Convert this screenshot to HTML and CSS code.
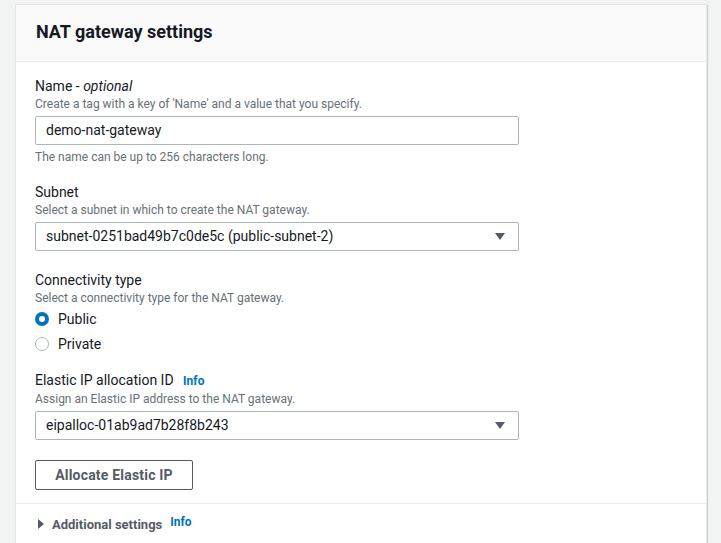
FILE: index.html
```html
<!DOCTYPE html>
<html>
<head>
<meta charset="utf-8">
<link rel="stylesheet" href="styles.css">
</head>
<body>
<div class="card">
  <div class="card-header"><h2 class="title">NAT gateway settings</h2></div>
  <div class="card-body">
    <div class="field">
      <div class="label">Name - <i>optional</i></div>
      <div class="desc">Create a tag with a key of 'Name' and a value that you specify.</div>
      <div class="input">demo-nat-gateway</div>
      <div class="hint">The name can be up to 256 characters long.</div>
    </div>
    <div class="field">
      <div class="label">Subnet</div>
      <div class="desc">Select a subnet in which to create the NAT gateway.</div>
      <div class="input select">subnet-0251bad49b7c0de5c (public-subnet-2)<span class="caret"></span></div>
    </div>
    <div class="field field-conn">
      <div class="label">Connectivity type</div>
      <div class="desc">Select a connectivity type for the NAT gateway.</div>
      <div class="radios">
        <div class="radio-row"><span class="radio checked"></span>Public</div>
        <div class="radio-row"><span class="radio"></span>Private</div>
      </div>
    </div>
    <div class="field field-eip">
      <div class="label">Elastic IP allocation ID <span class="info">Info</span></div>
      <div class="desc">Assign an Elastic IP address to the NAT gateway.</div>
      <div class="input select">eipalloc-01ab9ad7b28f8b243<span class="caret"></span></div>
    </div>
    <button class="btn">Allocate Elastic IP</button>
  </div>
  <div class="card-footer">
    <span class="expander"></span><span class="exp-label">Additional settings</span><span class="info info-sm">Info</span>
  </div>
</div>
</body>
</html>
```

FILE: styles.css
```css
html, body {
  margin: 0;
  padding: 0;
  background: #f2f3f3;
  font-family: Roboto, "Liberation Sans", sans-serif;
  color: #16191f;
}
body {
  padding: 4px 14px 0 15px;
  height: 543px;
  box-sizing: border-box;
  overflow: hidden;
}
.card {
  background: #fff;
  border: 1px solid #e4e6e6;
  box-shadow: 1px 1px 1px rgba(0,28,36,0.15);
  height: 560px;
}
.card-header {
  background: #fafafa;
  border-bottom: 1px solid #eaeded;
  padding: 16px 20px 0 20px;
  height: 40px;
}
.title {
  margin: 0;
  font-size: 18px;
  line-height: 22px;
  font-weight: 700;
}
.card-body {
  padding: 15px 0 13px 19px;
  border-bottom: 1px solid #eaeded;
}
.field + .field { margin-top: 18px; }
.field.field-conn { margin-top: 20px; }
.field.field-eip { margin-top: 15px; }
.label {
  font-size: 14px;
  line-height: 19px;
}
.desc, .hint {
  font-size: 12px;
  line-height: 16px;
  color: #687078;
}
.hint { margin-top: 4px; }
.input {
  margin-top: 4px;
  width: 484px;
  height: 29px;
  box-sizing: border-box;
  border: 1px solid #aab7b8;
  border-radius: 2px;
  padding: 0 10px;
  font-size: 14px;
  line-height: 27px;
  position: relative;
}
.caret {
  position: absolute;
  right: 13px;
  top: 10px;
  width: 0;
  height: 0;
  border-left: 5px solid transparent;
  border-right: 5px solid transparent;
  border-top: 7px solid #545b64;
}
.radio-row {
  display: flex;
  align-items: center;
  height: 25px;
  font-size: 14px;
}
.radio {
  width: 14px;
  height: 14px;
  box-sizing: border-box;
  border: 1px solid #aab7b8;
  border-radius: 50%;
  margin-right: 9px;
}
.radio.checked {
  border: 4px solid #0073bb;
}
.info {
  color: #0073bb;
  font-weight: 700;
  font-size: 12px;
  margin-left: 6px;
}
.btn {
  display: block;
  margin-top: 20px;
  height: 30px;
  width: 158px;
  border: 1px solid #545b64;
  border-radius: 2px;
  background: #fff;
  color: #545b64;
  font-family: inherit;
  font-size: 14px;
  font-weight: 700;
  letter-spacing: 0.2px;
  padding: 0;
}
.card-footer {
  display: flex;
  align-items: center;
  padding: 10px 20px 0 22px;
  height: 20px;
}
.expander {
  width: 0;
  height: 0;
  border-top: 5px solid transparent;
  border-bottom: 5px solid transparent;
  border-left: 6px solid #545b64;
  margin-right: 8px;
}
.exp-label {
  font-size: 13px;
  font-weight: 700;
  color: #545b64;
}
.info-sm { margin-left: 8px; position: relative; top: -2px; }
```
